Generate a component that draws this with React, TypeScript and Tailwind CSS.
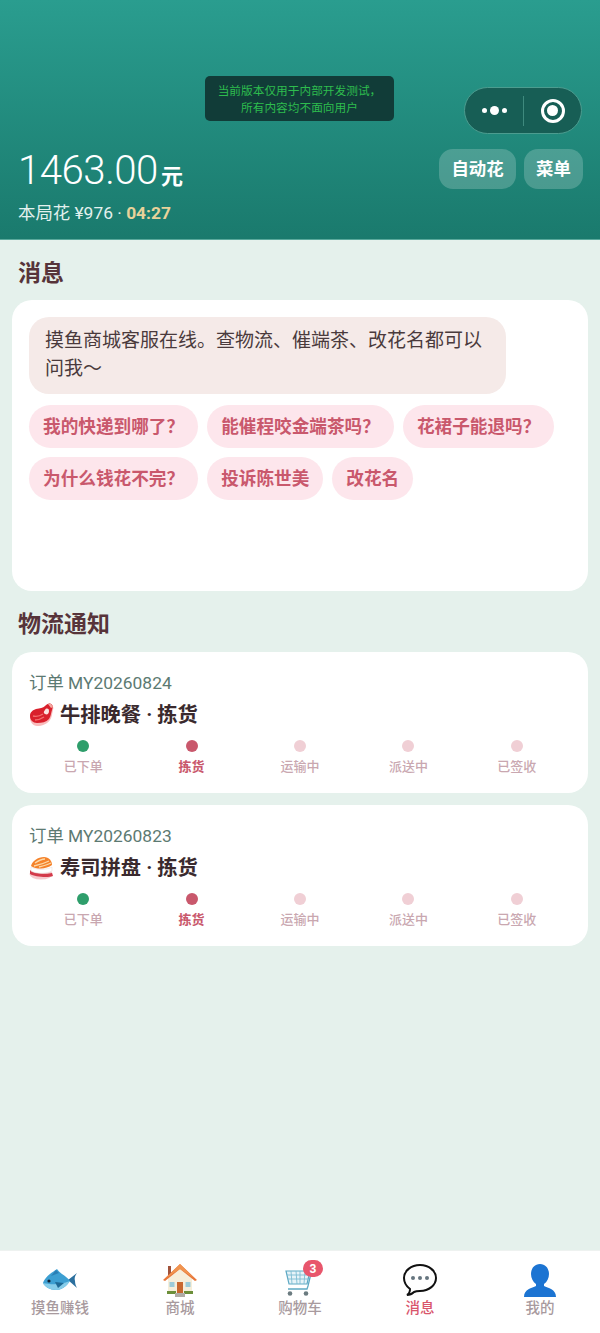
import type { ReactNode } from 'react'

const font = { fontFamily: 'Roboto, "Noto Sans CJK SC", sans-serif' }

const steps = ['已下单', '拣货', '运输中', '派送中', '已签收']

function Steak() {
  return (
    <svg width="25" height="24" viewBox="0 0 25 24" className="shrink-0">
      <path d="M1 15c0-4 2-7 6-8 4-1 7-1 9-3 2-2 4-4 6-3 2 1 3 4 2 6-1 4-1 7-3 10-3 4-8 6-13 6-4 0-7-4-7-8z" fill="#f9bcbc" />
      <path d="M1 13c0-4 3-6 6-7 4-1 7-1 9-3 2-2 4-3 6-2 2 1 2 3 1 6-1 3-1 6-3 9-3 3-7 4-12 4-4 0-7-3-7-7z" fill="#d9202c" />
      <path d="M16 7c1-2 4-2 4 1s-2 4-4 3-1-3 0-4z" fill="#fbe3df" />
      <path d="M19 1l3 0 2 3-2 1z" fill="#f4a9a0" />
      <path d="M4 13c4 1 7 0 10-2M6 17c3 0 6-1 9-3" stroke="#f26d6d" strokeWidth="1.4" fill="none" />
    </svg>
  )
}

function Sushi() {
  return (
    <svg width="25" height="24" viewBox="0 0 25 24" className="shrink-0">
      <ellipse cx="12" cy="18" rx="11.5" ry="5.5" fill="#f6c9cd" />
      <path d="M1 14c3 3 16 5 22 3l1 3c-5 2-18 1-23-2z" fill="#d33a4a" />
      <path d="M2 11c5 3 16 3 21 0v4c-5 3-16 3-21 0z" fill="#fff" stroke="#eadfdc" strokeWidth="0.6" />
      <path d="M2 10C3 5 9 1 15 1c5 0 8 4 8 8-5 4-15 5-21 1z" fill="#f5822a" />
      <path d="M6 7c3-2 6-4 10-4M5 10c5-1 11-3 15-5M10 11c4-1 8-2 12-4" stroke="#fcd9a8" strokeWidth="1.3" fill="none" />
    </svg>
  )
}

function Fish() {
  return (
    <svg width="36" height="24" viewBox="0 0 36 24" className="mb-[4px]">
      <path d="M26 11l9-7c-2 3-3 5-2 8 0 3 1 5 2 7z" fill="#2b6f9e" />
      <path d="M1 14C3 8 9 4 15 0c1 2 3 3 5 5 3 2 6 4 8 7-4 6-9 9-14 9-6 0-11-3-13-7z" fill="#3c9fd2" />
      <path d="M1 14c6 1 15 3 27-2-4 6-9 9-14 9-6 0-11-3-13-7z" fill="#86cdea" />
      <path d="M13 13l9 1-6 5z" fill="#1f6a96" />
      <path d="M14 1l3 3-8 3z" fill="#2a7fb5" />
      <circle cx="7" cy="12" r="1.6" fill="#123" />
    </svg>
  )
}

function House() {
  return (
    <svg width="34" height="33" viewBox="0 0 34 33">
      <rect x="5" y="2" width="3" height="9" fill="#a0523a" />
      <path d="M5 14L17 3l12 11v16H5z" fill="#f6eeda" />
      <path d="M0 16L17 0l17 16-2 1L17 5 2 17z" fill="#e8773a" />
      <path d="M17 0L3 14l14-9 14 9z" fill="#f0944f" />
      <rect x="14" y="18" width="6" height="11" fill="#c8682f" />
      <rect x="6.5" y="18" width="5" height="5" fill="#9ccbd8" />
      <rect x="22.5" y="18" width="5" height="5" fill="#9ccbd8" />
      <rect x="4" y="27" width="9" height="3" fill="#6c8f3a" />
      <rect x="21" y="27" width="9" height="3" fill="#6c8f3a" />
      <rect x="12" y="29" width="10" height="4" fill="#b0aca6" />
    </svg>
  )
}

function Cart() {
  return (
    <svg width="30" height="33" viewBox="0 0 30 33">
      <path d="M1 7h24l-3 13H4z" fill="#e6f3f8" stroke="#5ea9c4" strokeWidth="1.2" />
      <path d="M6 7l1 13M11 7l1 13M15 7v13M20 7l-1 13M2 11h22M3 15h20" stroke="#7dbcd3" strokeWidth="0.9" />
      <path d="M28 1l-5 21-1 3H3" stroke="#5ea9c4" strokeWidth="1.3" fill="none" />
      <circle cx="5" cy="29.5" r="2.3" fill="#6b7b80" />
      <circle cx="21" cy="29.5" r="2.3" fill="#6b7b80" />
    </svg>
  )
}

function Bubble() {
  return (
    <svg width="36" height="34" viewBox="0 0 36 34">
      <path d="M18 2c9 0 16 6 16 13s-7 13-16 13c-2 0-4 0-6 1-2 2-4 3-7 3 2-1 3-3 3-6C4 23 2 19 2 15 2 8 9 2 18 2z" fill="#fff" stroke="#111" strokeWidth="2" />
      <circle cx="11" cy="15" r="2" fill="#66757f" />
      <circle cx="18" cy="15" r="2" fill="#66757f" />
      <circle cx="25" cy="15" r="2" fill="#66757f" />
    </svg>
  )
}

function Person() {
  return (
    <svg width="32" height="33" viewBox="0 0 32 33">
      <path d="M16 0c6 0 9 5 9 10 0 4-2 8-5 10v2c4 2 12 3 12 11H0c0-8 8-9 12-11v-2c-3-2-5-6-5-10C7 5 10 0 16 0z" fill="#1c74d2" />
    </svg>
  )
}

function Chip({ children }: { children: ReactNode }) {
  return (
    <div className="h-[43px] px-[14px] pt-[1px] rounded-full bg-[#fde6ec] text-[#c9586c] text-[17.65px] font-semibold flex items-center">
      {children}
    </div>
  )
}

function OrderCard({ no, icon, title }: { no: string; icon: ReactNode; title: string }) {
  return (
    <div className="h-[141px] rounded-[20px] bg-white px-[17px] pt-[19px] mx-3">
      <div className="text-[17.4px] leading-[24px] text-[#5c7a72]">订单 {no}</div>
      <div className="flex items-center gap-[6px] mt-[6px] h-[28px] text-[20.3px] font-bold text-[#3a2a2e]">
        {icon}
        <span>{title}</span>
      </div>
      <div className="grid grid-cols-5 mt-[11px]">
        {steps.map((s, i) => (
          <div key={s} className="flex flex-col items-center gap-[6px]">
            <span
              className={`w-3 h-3 rounded-full ${
                i === 0 ? 'bg-[#2e9e6b]' : i === 1 ? 'bg-[#c9586c]' : 'bg-[#f0cfd5]'
              }`}
            />
            <span
              className={`text-[13px] leading-[18px] ${
                i === 1 ? 'text-[#c9586c] font-bold' : 'text-[#c9a7b0] font-medium'
              }`}
            >
              {s}
            </span>
          </div>
        ))}
      </div>
    </div>
  )
}

function Tab({ icon, label, active }: { icon: ReactNode; label: string; active?: boolean }) {
  return (
    <div className="flex-1 flex flex-col items-center">
      <div className="h-[34px] flex items-end justify-center">{icon}</div>
      <span className={`text-[14.5px] leading-[20px] mt-[2px] font-medium ${active ? 'text-[#d9566c]' : 'text-[#a89a9e]'}`}>
        {label}
      </span>
    </div>
  )
}

export default function App() {
  return (
    <div className="relative w-[600px] h-[1333px] flex flex-col bg-[#e5f1ec] overflow-hidden" style={font}>
      {/* header */}
      <div className="h-[240px] shrink-0 bg-gradient-to-b from-[#2a9d8f] to-[#1a7a6d] border-b border-[#5aa99c] px-[18px] pt-[149px] flex justify-between">
        <div>
          <div className="flex items-baseline text-white h-[44px] leading-[44px]">
            <span className="text-[40.2px] font-light tracking-[-0.5px]">1463.00</span>
            <span className="text-[22px] font-semibold ml-[3px]">元</span>
          </div>
          <div className="mt-[8px] text-[17.4px] leading-[24px] text-[#e3f1ee]">
            本局花 ¥976 · <span className="font-bold text-[#e8d29a]">04:27</span>
          </div>
        </div>
        <div className="flex gap-2 -mr-[1px]">
          <div className="h-10 w-[77px] rounded-[14px] bg-white/20 text-white text-[17.4px] font-bold flex items-center justify-center">自动花</div>
          <div className="h-10 w-[59px] rounded-[14px] bg-white/20 text-white text-[17.4px] font-bold flex items-center justify-center">菜单</div>
        </div>
      </div>

      {/* dev notice */}
      <div className="absolute left-[205px] top-[76px] w-[189px] h-[45px] pt-[2px] rounded-[5px] bg-[#113c38] text-[#2ebd4e] text-[11.7px] leading-[17px] flex flex-col items-center justify-center">
        <span>当前版本仅用于内部开发测试，</span>
        <span>所有内容均不面向用户</span>
      </div>

      {/* capsule */}
      <div className="absolute left-[464px] top-[87px] w-[118px] h-[47px] rounded-full bg-[#175e55] border border-[#4c9c8f] flex items-center">
        <div className="w-[58px] flex items-center justify-center gap-[3px]">
          <span className="w-[5px] h-[5px] rounded-full bg-white" />
          <span className="w-[9px] h-[9px] rounded-full bg-white" />
          <span className="w-[5px] h-[5px] rounded-full bg-white" />
        </div>
        <div className="w-px h-[30px] bg-[#3f8a7e]" />
        <div className="flex-1 flex items-center justify-center">
          <div className="w-6 h-6 rounded-full border-[3px] border-white flex items-center justify-center">
            <span className="w-[11px] h-[11px] rounded-full bg-white" />
          </div>
        </div>
      </div>

      {/* content */}
      <div className="flex-1">
        <h2 className="px-[18px] pt-[17px] h-[60px] text-[23px] leading-[34px] font-bold text-[#57343a]">消息</h2>
        <div className="h-[291px] mx-3 rounded-[20px] bg-white px-[17px] pt-[17px]">
          <div className="w-[477px] h-[77px] rounded-[20px] bg-[#f5eae8] px-4 py-[10px] text-[19px] leading-[27.5px] text-[#4a3a3c]">
            摸鱼商城客服在线。查物流、催端茶、改花名都可以问我～
          </div>
          <div className="flex flex-wrap gap-x-[9px] gap-y-[9px] mt-[11px]">
            <Chip>我的快递到哪了？</Chip>
            <Chip>能催程咬金端茶吗？</Chip>
            <Chip>花裙子能退吗？</Chip>
            <Chip>为什么钱花不完？</Chip>
            <Chip>投诉陈世美</Chip>
            <Chip>改花名</Chip>
          </div>
        </div>
        <h2 className="px-[18px] pt-[17px] h-[61px] text-[23px] leading-[34px] font-bold text-[#57343a]">物流通知</h2>
        <div className="flex flex-col gap-3">
          <OrderCard no="MY20260824" icon={<Steak />} title="牛排晚餐 · 拣货" />
          <OrderCard no="MY20260823" icon={<Sushi />} title="寿司拼盘 · 拣货" />
        </div>
      </div>

      {/* tab bar */}
      <div className="relative h-[83px] shrink-0 bg-white border-t border-[#eef2f0] flex pt-[12px]">
        <Tab icon={<Fish />} label="摸鱼赚钱" />
        <Tab icon={<House />} label="商城" />
        <Tab icon={<Cart />} label="购物车" />
        <Tab icon={<Bubble />} label="消息" active />
        <Tab icon={<Person />} label="我的" />
        <span className="absolute left-[303px] top-[9px] w-5 h-[17px] rounded-full bg-[#e8566c] text-white text-[12px] font-bold flex items-center justify-center">3</span>
      </div>
    </div>
  )
}
